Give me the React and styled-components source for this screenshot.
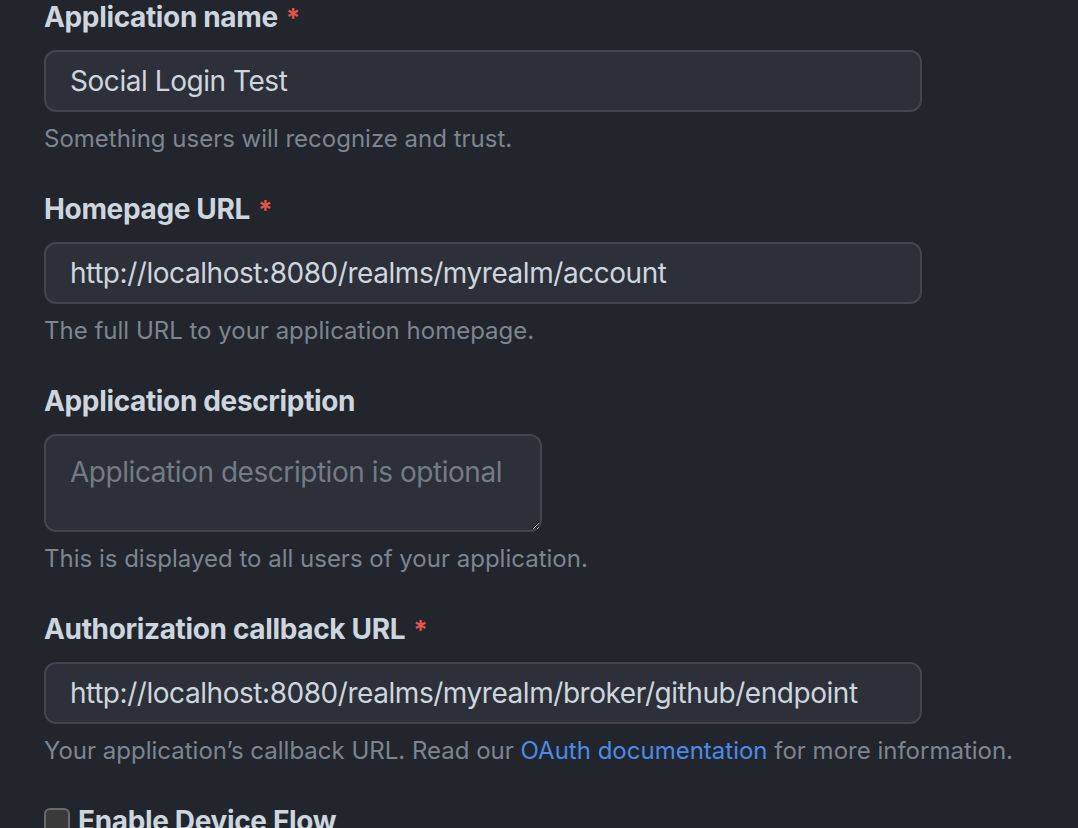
import styled, { createGlobalStyle } from "styled-components";

const GlobalStyle = createGlobalStyle`
  html, body {
    margin: 0;
    background-color: #22252b;
  }
  body {
    font-family: Inter, "Noto Sans", "Liberation Sans", sans-serif;
    color: #cdd5df;
    overflow: hidden;
  }
`;

const Page = styled.form`
  padding: 0 0 0 44px;
  height: 828px;
  box-sizing: border-box;
`;

const FieldGroup = styled.div`
  margin-bottom: 35px;
`;

const Label = styled.label`
  display: block;
  height: 34px;
  font-size: 28px;
  line-height: 34px;
  font-weight: 700;
  letter-spacing: -0.35px;
  color: #cdd5df;
`;

const Required = styled.span`
  color: #e5534b;
  margin-left: 8px;
  font-size: 26px;
  line-height: 1;
`;

const Input = styled.input`
  display: block;
  box-sizing: border-box;
  margin-top: 16px;
  width: 878px;
  height: 62px;
  padding: 0 24px;
  background-color: #2d3038;
  border: 2px solid #41454d;
  border-radius: 12px;
  font-family: inherit;
  font-size: 28px;
  letter-spacing: -0.45px;
  color: #cdd5df;
  outline: none;
`;

const TextArea = styled.textarea`
  display: block;
  box-sizing: border-box;
  margin-top: 16px;
  width: 498px;
  height: 98px;
  padding: 16px 22px 12px 24px;
  background-color: #2d3038;
  border: 2px solid #41454d;
  border-radius: 12px;
  font-family: inherit;
  font-size: 28px;
  line-height: 40px;
  letter-spacing: -0.45px;
  color: #cdd5df;
  outline: none;
  resize: vertical;
  &::placeholder {
    color: #737b87;
  }
`;

const Hint = styled.p`
  margin: 9px 0 0;
  font-size: 24px;
  line-height: 36px;
  color: #7d8590;
`;

const Link = styled.a`
  color: #4a8ce8;
  text-decoration: none;
`;

const CheckRow = styled.label`
  display: flex;
  align-items: flex-start;
  gap: 8px;
`;

const Box = styled.span`
  width: 22px;
  height: 22px;
  margin-top: 4px;
  flex: none;
  background-color: #3a3a3b;
  border: 2px solid #6b6b6d;
  border-radius: 6px;
`;

const CheckText = styled.span`
  font-size: 28px;
  line-height: 34px;
  font-weight: 700;
  letter-spacing: -0.35px;
  color: #cdd5df;
`;

export default function App() {
  return (
    <>
      <GlobalStyle />
      <Page>
        <FieldGroup>
          <Label>
            Application name<Required>*</Required>
          </Label>
          <Input defaultValue="Social Login Test" />
          <Hint>Something users will recognize and trust.</Hint>
        </FieldGroup>
        <FieldGroup>
          <Label>
            Homepage URL<Required>*</Required>
          </Label>
          <Input defaultValue="http://localhost:8080/realms/myrealm/account" />
          <Hint>The full URL to your application homepage.</Hint>
        </FieldGroup>
        <FieldGroup>
          <Label>Application description</Label>
          <TextArea placeholder="Application description is optional" />
          <Hint>This is displayed to all users of your application.</Hint>
        </FieldGroup>
        <FieldGroup>
          <Label>
            Authorization callback URL<Required>*</Required>
          </Label>
          <Input defaultValue="http://localhost:8080/realms/myrealm/broker/github/endpoint" />
          <Hint>
            Your application’s callback URL. Read our{" "}
            <Link href="#">OAuth documentation</Link> for more information.
          </Hint>
        </FieldGroup>
        <CheckRow>
          <Box />
          <CheckText>Enable Device Flow</CheckText>
        </CheckRow>
      </Page>
    </>
  );
}
